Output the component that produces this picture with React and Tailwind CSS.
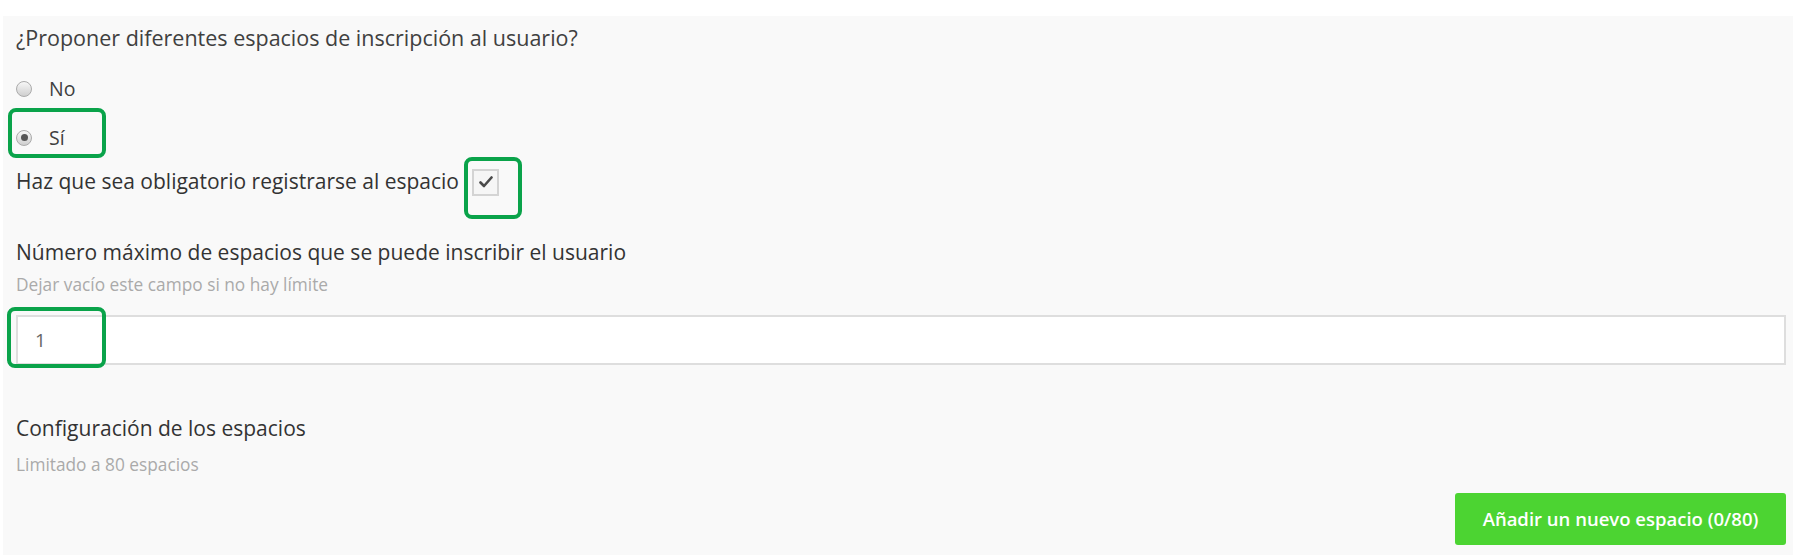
import React from 'react'

const font = { fontFamily: '"Open Sans", "Noto Sans", sans-serif' }

const Highlight = ({ className }) => (
  <span className={`pointer-events-none absolute rounded-[8px] border-[4px] border-[#0aa34a] ${className}`} />
)

const Radio = ({ checked, label, highlight }) => (
  <label className="relative flex h-[49px] items-center gap-[17px] text-[19.5px] text-[#404040]">
    <span className="flex h-[16px] w-[16px] items-center justify-center rounded-full border border-[#ababab] bg-gradient-to-b from-[#f7f7f7] to-[#cfcfcf]">
      {checked && <span className="h-[7px] w-[7px] rounded-full bg-[#555]" />}
    </span>
    <span>{label}</span>
    {highlight && <Highlight className="-left-[8px] top-[-5px] h-[50px] w-[98px]" />}
  </label>
)

export default function App() {
  return (
    <div className="min-h-screen bg-white pt-[16px]" style={font}>
      <div className="mx-[3px] min-h-[539px] bg-[#f9f9f9] pl-[13px] pr-[7px] pt-[8px]">
        <p className="text-[21.5px] leading-[28px] text-[#404040]">
          ¿Proponer diferentes espacios de inscripción al usuario?
        </p>

        <div className="mt-[12px]">
          <Radio label="No" />
          <Radio checked label="Sí" highlight />
        </div>

        <div className="flex h-[40px] items-center text-[21px] text-[#333]">
          <span>Haz que sea obligatorio registrarse al espacio</span>
          <span className="relative ml-[13px] flex h-[27px] w-[27px] items-center justify-center border-2 border-[#d4d4d4] bg-[#f6f6f6]">
            <svg width="14" height="12" viewBox="0 0 14 12" fill="none">
              <path d="M1.5 6.5 L5 10 L12.5 1.5" stroke="#4a4a4a" strokeWidth="2.6" strokeLinecap="round" strokeLinejoin="round" />
            </svg>
            <Highlight className="-left-[10px] -top-[14px] h-[62px] w-[58px]" />
          </span>
        </div>

        <p className="mt-[36px] text-[21px] leading-[28px] text-[#333]">
          Número máximo de espacios que se puede inscribir el usuario
        </p>
        <p className="mt-[8px] text-[17.3px] leading-[22px] text-[#aaa]">
          Dejar vacío este campo si no hay límite
        </p>

        <div className="relative mt-[19px]">
          <input
            defaultValue="1"
            className="block h-[50px] w-full border-2 border-[#dedede] bg-white px-[17px] text-[19px] text-[#666] outline-none"
            style={font}
          />
          <Highlight className="-left-[9px] -top-[8px] h-[61px] w-[99px]" />
        </div>

        <p className="mt-[49px] text-[21px] leading-[28px] text-[#333]">
          Configuración de los espacios
        </p>
        <p className="mt-[12px] text-[17.3px] leading-[22px] text-[#aaa]">Limitado a 80 espacios</p>

        <div className="mt-[17px] flex justify-end">
          <button className="h-[52px] w-[331px] rounded-[3px] bg-[#4cd432] text-[18.5px] font-semibold text-white" style={font}>
            Añadir un nuevo espacio (0/80)
          </button>
        </div>
      </div>
    </div>
  )
}
